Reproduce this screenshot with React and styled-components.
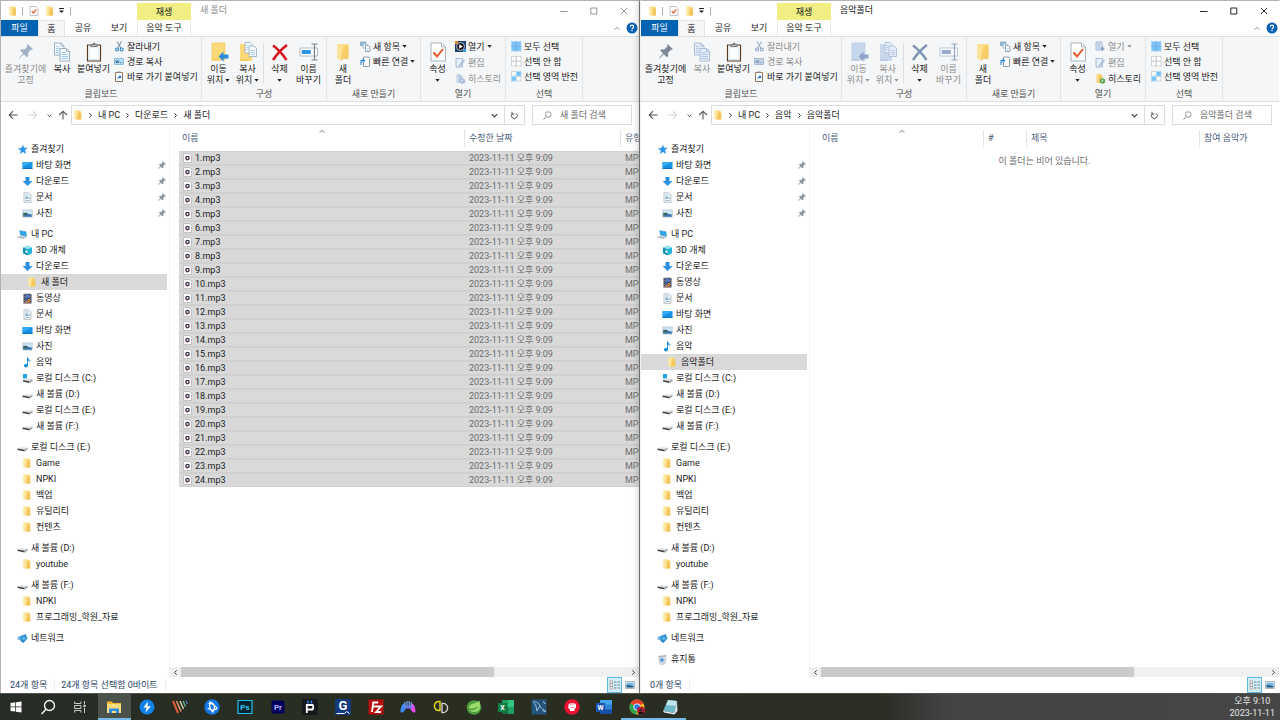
import React from 'react';
import styled, { createGlobalStyle, css } from 'styled-components';

const GlobalStyle = createGlobalStyle`
  *, *::before, *::after { box-sizing: border-box; }
  body { margin: 0; background: #fff; }
  body, button, input {
    font-family: Roboto, "Noto Sans CJK KR", sans-serif;
    font-size: 9px;
    line-height: 12px;
    color: #1b1b1b;
  }
  button { border: 0; padding: 0; margin: 0; background: none; cursor: pointer; }
  svg { display: block; flex: none; }
  ul { list-style: none; margin: 0; padding: 0; }
`;

/* ---------- drawings ---------- */

const Svg = ({ w = 10, h = 10, box, children }) => (
  <svg width={w} height={h} viewBox={box || `0 0 ${w} ${h}`} fill="none" aria-hidden="true">
    {children}
  </svg>
);

const FolderIcon = ({ w = 10 }) => (
  <Svg w={w} h={10}>
    <path d="M1.5 .5h4.2l2.3.6v8.4H1.5z" fill="#fbdc86" />
    <path d="M5.7 1.2 8.4 3v6.5H4z" fill="#f3c75c" />
    <path d="M1.5.5h2v9h-2z" fill="#fde8a6" />
  </Svg>
);
const CheckDocIcon = () => (
  <Svg w={10} h={10}>
    <path d="M1 .5h6l2 2v7H1z" fill="#fff" stroke="#b4b4b4" strokeWidth=".8" />
    <path d="m2.8 5 1.6 2 3-3.6" stroke="#e8562a" strokeWidth="1.2" />
  </Svg>
);
const QuickMenuIcon = () => (
  <Svg w={5} h={6}><path d="M0 .5h5" stroke="#222" /><path d="M0 2.5h5L2.500 5z" fill="#222" /></Svg>
);
const CaretIcon = ({ color = '#222' }) => (
  <Svg w={5} h={3}><path d="M.3 0h4.4L2.5 2.8z" fill={color} /></Svg>
);
const ChevronDown = ({ w = 7, color = '#444' }) => (
  <Svg w={w} h={w} box="0 0 7 7"><path d="m.8 2.2 2.7 2.7 2.7-2.7" stroke={color} strokeWidth="1.2" /></Svg>
);
const ChevronUp = ({ color = '#777' }) => (
  <Svg w={6} h={5} box="0 0 7 6"><path d="m.8 4.3 2.7-2.7 2.7 2.7" stroke={color} strokeWidth="1.1" /></Svg>
);
const ChevronRight = ({ flip }) => (
  <Svg w={5} h={7}><path d={flip ? 'M3.700 1.300 1.500 3.500l2.200 2.200' : 'M1.300 1.300l2.200 2.200-2.200 2.200'} stroke="#3a3a3a" /></Svg>
);
const MinimizeIcon = ({ color }) => <Svg w={8} h={8}><path d="M0 4.5h7.5" stroke={color} strokeWidth=".9" /></Svg>;
const MaximizeIcon = ({ color }) => <Svg w={8} h={8}><path d="M.8 1h6v6h-6z" stroke={color} strokeWidth=".9" /></Svg>;
const CloseIcon = ({ color }) => <Svg w={8} h={8}><path d="m1 1 6 6M7 1 1 7" stroke={color} strokeWidth=".9" /></Svg>;
const HelpIcon = () => (
  <Svg w={12} h={12}>
    <circle cx="6" cy="6" r="5.5" fill="#0a63b4" />
    <path d="M4.4 4.7c0-2.1 3.3-2 3.3 0C7.700 5.900 6 5.900 6 7.200" stroke="#fff" strokeWidth="1.2" />
    <path d="M5.4 8.100h1.200v1.200H5.400z" fill="#fff" />
  </Svg>
);

const BigPinIcon = ({ off }) => (
  <Svg w={20} h={20}>
    <g fill={off ? '#a3b1c6' : '#7d8a96'}>
      <path d="m11.500 2 5.500 5.300-1.500.7-.6-.2-2.900 3.300.2 3-1.200 1.200-3.200-3.100L3.400 16.500l-.4-.4 4-4.700L4.200 8.500l1.200-1.200 3 .1L11.500 4.200l-.5-.7z" />
    </g>
  </Svg>
);
const CopyIcon = ({ off }) => (
  <Svg w={20} h={20}>
    <g fill={off ? '#e3ebf8' : '#f4f9ff'} stroke={off ? '#a5b7d2' : '#93a7bd'} strokeWidth=".9">
      <path d="M2.500 1h6.500l3 3v9H2.500z" />
      <path d="M8 6.500h6.500l3 3v9.500H8z" />
    </g>
    <path d="M4 4.500h3M4 6.500h3M4 8.500h3M4 10.500h3M9.500 10.500h4.500M9.500 12.500h6.500M9.500 14.500h6.500M9.500 16.500h6.500" stroke={off ? '#b6c8e6' : '#9fcaf2'} />
    <path d="M9 1v3h3M14.500 6.500v3h3" stroke={off ? '#a5b7d2' : '#93a7bd'} strokeWidth=".8" />
  </Svg>
);
const PasteIcon = () => (
  <Svg w={20} h={20}>
    <path d="M3.500 3h13v16h-13z" fill="#fdfeff" stroke="#5a3d23" strokeWidth="1.200" />
    <path d="M5 5h10v12.500H5z" stroke="#d8e6f2" />
    <path d="M6.500 2h2c.3-1.700 2.700-1.700 3 0h2v3h-7z" fill="#7c7c7c" />
    <path d="M7.500 3h5v1h-5z" fill="#bdbdbd" />
  </Svg>
);
const CutIcon = ({ off }) => (
  <Svg w={11} h={11}>
    <path d="M3 .5 7 7M7.500.5 3.700 7" stroke={off ? '#9fb0c8' : '#8796a5'} strokeWidth="1.100" />
    <circle cx="3" cy="8.500" r="1.500" stroke={off ? '#8ea6c8' : '#2f87d0'} strokeWidth="1.100" />
    <circle cx="7.700" cy="8.500" r="1.500" stroke={off ? '#8ea6c8' : '#2f87d0'} strokeWidth="1.100" />
  </Svg>
);
const PathIcon = ({ off }) => (
  <Svg w={11} h={11}>
    <path d="M.5 2.500h9v6h-9z" fill={off ? '#c4d2e8' : '#b3dcf8'} stroke={off ? '#a9b9d4' : '#8fbfe0'} />
    <path d="m1.500 4.500.9 2.500.9-2.500.9 2.500.9-2.500M6 6.700h.8M7.800 6.700h.8" stroke={off ? '#758cab' : '#2b5878'} strokeWidth=".8" />
  </Svg>
);
const ShortcutIcon = () => (
  <Svg w={11} h={11}>
    <path d="M1.500 1.500h7v9h-7z" fill="#fff" stroke="#8a745e" />
    <path d="M3.500.5h3v1.500h-3z" fill="#888" />
    <path d="M3.500 8.500c-.3-2 .7-3.300 2-3.300V4l2.200 2-2.200 2V6.700c-1 0-1.700.7-2 1.800z" fill="#1f6fc4" />
  </Svg>
);
const MoveToIcon = ({ off }) => (
  <Svg w={20} h={20}>
    <path d="M3 1h13v17H3z" fill={off ? '#c9d7ee' : '#fbd978'} />
    <path d="M3 1h13v17H3z" stroke={off ? '#bccbe4' : '#f0cb66'} strokeWidth=".8" />
    <path d="M2.500 17h8v1.500h-8z" fill={off ? '#b6c6e0' : '#f5ca52'} />
    <path d="m9.500 14.500 5-5v3h5v4h-5v3z" fill={off ? '#8ea4c8' : '#2d8ddb'} />
  </Svg>
);
const CopyToIcon = ({ off }) => (
  <Svg w={20} h={20}>
    <path d="M2 2h12v17H2z" fill={off ? '#c9d7ee' : '#fbd978'} />
    <path d="M2 17.500h8V19H2z" fill={off ? '#b6c6e0' : '#f5ca52'} />
    <g fill={off ? '#e6edf8' : '#f6faff'} stroke={off ? '#a5b7d2' : '#98a9bb'} strokeWidth=".8">
      <path d="M7 .500h5l2 2v8.500H7z" />
      <path d="M11 4h5l2.500 2.500v8H11z" />
    </g>
    <path d="M8.500 3.500h2M8.500 5.500h2M8.500 7.500h2M12.500 8.500h4.500M12.500 10.500h4.500M12.500 12.500h4.500" stroke={off ? '#b6c8e6' : '#9fcaf2'} strokeWidth=".9" />
  </Svg>
);
const DeleteIcon = ({ off }) => (
  <Svg w={20} h={20}>
    <path d="M3 3.500c5 3.500 9.500 8.500 13.500 14.500M17 3C11.500 7 7 12 3 18" stroke={off ? '#8095b5' : '#d8101c'} strokeWidth="2.500" />
  </Svg>
);
const RenameIcon = ({ off }) => (
  <Svg w={20} h={20}>
    <path d="M1 6h17.500v8H1z" fill="#fff" stroke={off ? '#afbed6' : '#a9b4c0'} strokeWidth=".9" />
    <path d="M2.800 8h9v4h-9z" fill={off ? '#96abce' : '#2f93de'} />
    <path d="M12.500 2h2c1 0 1 .5 1 1.500v13c0 1-.3 1.500-1 1.500h-2M18.500 2h-2c-.7 0-1 .5-1 1.500v13c0 1 .3 1.500 1 1.500h2" stroke={off ? '#8fa3c2' : '#77828e'} strokeWidth="1.200" />
  </Svg>
);
const NewFolderIcon = () => (
  <Svg w={20} h={20}>
    <path d="M4 2h10.500l1 1v13.500H4z" fill="#fbdc86" />
    <path d="M10.500 5 15.500 3v14h-5l-3 2z" fill="#f6cd68" />
    <path d="M4 2.500 7.500 5v14L4 16.500z" fill="#fbe4a0" />
  </Svg>
);
const NewItemIcon = () => (
  <Svg w={11} h={11}>
    <path d="M.5 1h5v3.500h-5z" fill="#8fc5ee" stroke="#7f95a8" strokeWidth=".7" />
    <path d="M3 3h4v4H3z" fill="#f1f7fc" stroke="#8ba0b3" strokeWidth=".7" />
    <path d="M5.500 4.500h3l1.500 1.500v4.500H5.500z" fill="#fff" stroke="#7d8d9c" strokeWidth=".8" />
    <path d="M7 7.500h1.500M7 9h1.500" stroke="#7cb7e8" strokeWidth=".7" />
  </Svg>
);
const EasyAccessIcon = () => (
  <Svg w={11} h={11}>
    <path d="M3.500 1h4.500l1.500 1.500v8h-6z" fill="#fff" stroke="#7d8893" strokeWidth=".8" />
    <path d="M1 9V4.500h2.500M2.600 2.500l2 2-2 2" stroke="#2f8ad6" strokeWidth="1.100" />
  </Svg>
);
const PropertiesIcon = () => (
  <Svg w={20} h={20}>
    <path d="M3 1h10.500l4 4v14H3z" fill="#fff" stroke="#a3abb3" strokeWidth=".9" />
    <path d="M13.500 1v4h4" stroke="#a3abb3" strokeWidth=".9" />
    <path d="m5.500 10.500 3.500 4 6-7.500" stroke="#e4572a" strokeWidth="2" />
  </Svg>
);
const MediaIcon = () => (
  <Svg w={11} h={11}>
    <path d="M0 0h11v11H0z" fill="#1d3f73" />
    <path d="M0 0h3v3H0z" fill="#e98a2d" /><path d="M8 8h3v3H8z" fill="#3e9be4" />
    <circle cx="5.500" cy="5.500" r="4" fill="#1a1a1a" stroke="#d6dde6" strokeWidth=".8" />
    <path d="M4.200 3.300 7.900 5.500 4.200 7.700z" fill="#fff" />
  </Svg>
);
const OpenIcon = () => (
  <Svg w={11} h={11}>
    <path d="M1 1h6v8H1z" fill="#e2ebf7" stroke="#9db2d2" strokeWidth=".9" />
    <path d="M2.500 3h3M2.500 5h3M2.500 7h2" stroke="#9db2d2" /><path d="M5.500 7.500h4M7.500 5.500v4.500" stroke="#8198be" strokeWidth="1.300" />
  </Svg>
);
const EditIcon = () => (
  <Svg w={11} h={11}>
    <path d="M1 1.500h6.500v8.500H1z" fill="#e6eef9" stroke="#a3b6d3" strokeWidth=".9" />
    <path d="m3.800 8.500 5-6 1.200 1-5 6-1.600.5z" fill="#9eb4d8" />
  </Svg>
);
const HistoryIcon = ({ off }) => (
  <Svg w={11} h={11}>
    <path d="M1.500 1h4.500v9H1.500z" fill={off ? '#c8d6ec' : '#f9d77c'} />
    <path d="M4 2.500h3.500V10H4z" fill={off ? '#b7c8e3' : '#f1c65c'} />
    <circle cx="7.500" cy="8" r="2.700" fill={off ? '#a5b9da' : '#5ba453'} />
    <path d="M7.500 6.500V8.200h-1.300" stroke="#fff" strokeWidth=".8" />
  </Svg>
);
const SelectGrid = ({ cells }) => (
  <Svg w={11} h={11}>
    {[[1, 1], [6, 1], [1, 6], [6, 6]].map(([x, y], i) => (
      <rect key={i} x={x - 0.5} y={y - 0.5} width="4.500" height="4.500" fill={cells[i] ? '#7cc3f5' : '#fff'} stroke={cells[i] ? '#a8d8fa' : '#c9ced4'} strokeWidth=".8" />
    ))}
    {cells[0] && cells[1] ? <path d="M5.200.500v10M.500 5.200h10" stroke="#3f93d8" strokeWidth=".7" /> : null}
  </Svg>
);

const BackIcon = () => <Svg w={10} h={10}><path d="M9.500 5H1.500M5 1.200 1.200 5 5 8.800" stroke="#555" strokeWidth="1.100" /></Svg>;
const ForwardIcon = () => <Svg w={10} h={10}><path d="M.5 5h8M5 1.200 8.800 5 5 8.800" stroke="#cfcfcf" /></Svg>;
const UpIcon = () => <Svg w={10} h={10}><path d="M5 9.500V1.500M1.200 5 5 1.200 8.800 5" stroke="#555" strokeWidth="1.100" /></Svg>;
const RefreshIcon = () => (
  <Svg w={9} h={9}><path d="M2.200 2.500a3 3 0 1 0 4.300 0M2 .7v2.300h2.500" stroke="#555" /></Svg>
);
const SearchIcon = () => (
  <Svg w={9} h={9}><circle cx="5.300" cy="3.500" r="2.800" stroke="#8a8a8a" strokeWidth=".9" /><path d="M3.200 5.500.5 8.500" stroke="#8a8a8a" /></Svg>
);

const navIcons = {
  star: <Svg w={11} h={11}><path d="m6 .8 1.200 3 3.500-.1-2.700 2.400 1.200 3.700-3.300-1.900-3 2.200.9-3.700L.8 4.500l3.600-.5z" fill="#2c97e8" /></Svg>,
  desktop: <Svg w={11} h={11}><path d="M.5 2h10v7H.5z" fill="#1492e6" /><path d="M.5 8.200h10V9H.5z" fill="#0b6cb8" /><path d="M.5 2h10L.5 7z" fill="#38aaf2" /></Svg>,
  down: <Svg w={11} h={11}><path d="M3.500 1h4v4h3l-5 5-5-5h3z" fill="#2d8fe2" /></Svg>,
  doc: <Svg w={11} h={11}><path d="M2 .8h5l2 2v7.500H2z" fill="#f8fafc" stroke="#a9b3bd" strokeWidth=".8" /><path d="M3.500 3h3M3.500 8.500h4" stroke="#8ba9c4" strokeWidth=".8" /><path d="M3.500 4.500h2.200v2.500H3.500z" fill="#5fa9de" /><path d="M6.500 5h1.500M6.500 6.500h1.500" stroke="#7f9fbc" strokeWidth=".8" /></Svg>,
  picture: <Svg w={11} h={11}><path d="M.8 2h9.400v7H.8z" fill="#cfe6f7" stroke="#b4bfc9" strokeWidth=".8" /><path d="m1.200 5.500 3-1 2.500 1.500 3.100.5v2.200H1.200z" fill="#3c78a8" /><path d="M1.200 5.200 4 4.800l1.500 2H1.200z" fill="#3e5f4a" /></Svg>,
  pc: <Svg w={11} h={11}><path d="m2.500 1.500 6.500 1 .8 5-6.300-1.300z" fill="#2aa4ec" stroke="#6aa0c6" strokeWidth=".5" /><path d="M.5 7.500 4 7l6 1.300L6.500 10 0 8.800z" fill="#b7c2cc" /></Svg>,
  cube: <Svg w={11} h={11}><path d="M5.500.8 10 2.500v5.800L5.500 10.200 1 8.300V2.500z" fill="#22b5d4" /><path d="m1 2.500 4.500 1.700v6L1 8.300z" fill="#0f91b4" /><path d="M5.500.8 10 2.500 5.500 4.200 1 2.500z" fill="#8fe4f2" /><path d="m3.500 5 2 .7v2.500l-2-.7z" fill="#e8fbff" /></Svg>,
  video: <Svg w={11} h={11}><path d="M1.500.8h8v9.700h-8z" fill="#3a3f4a" /><path d="M3 1.500h5v3.700H3z" fill="#5577b8" /><path d="M3 6h5v3.800H3z" fill="#c77b47" /><path d="M3 6h3v2H3z" fill="#49679e" /><path d="M2.200 1v9.500M8.800 1v9.500" stroke="#cdd3da" strokeWidth=".6" strokeDasharray="1 1" /></Svg>,
  music: <Svg w={11} h={11}><path d="M5 .5h1c.3 1.800 3 2.500 2.500 5-.5-1.300-1.400-1.800-2.500-2v5.300A2 1.700 0 1 1 5 7.200z" fill="#1c8fe0" /></Svg>,
  drive: <Svg w={11} h={11}><path d="M.5 6.500 4 5l6.500.8-3 2z" fill="#dfe2e5" /><path d="m.5 6.500 7 1.300v1.700l-7-1.500z" fill="#3f4347" /><path d="m7.500 7.800 3-2v1.700l-3 2z" fill="#8c9196" /></Svg>,
  driveC: <Svg w={11} h={11}><path d="M1 1h4v4.500H1z" fill="#21a5ea" /><path d="M1 7 4 5.500l6.500.8-3 2z" fill="#dfe2e5" /><path d="m1 7 6.500 1.300V10L1 8.500z" fill="#3f4347" /><path d="m7.500 8.300 3-2V8l-3 2z" fill="#8c9196" /></Svg>,
  network: <Svg w={11} h={11}><path d="m.5 4 5-2v6l-5-1.500z" fill="#76b9e4" /><path d="m3.500 3.500 5-2.500 2 4.500-4 4.500-3-2z" fill="#2d87c8" /><circle cx="6.800" cy="5.500" r="2" fill="#57b2ef" /></Svg>,
  trash: <Svg w={11} h={11}><path d="m1.500 2.200 7.500-1L8 10l-4.800.5z" fill="#d5dde4" stroke="#a7b2bc" strokeWidth=".6" /><path d="M1.500 2.200c2 1 5.500.5 7.500-1" stroke="#93a1ad" strokeWidth=".7" /><path d="M3.500 4.500h3v3h-3z" fill="#3c94dd" /></Svg>,
  folder: <FolderIcon w={11} />,
};
const SmallPin = () => (
  <Svg w={8} h={8} box="2 1 16 16">
    <path d="m11.500 2 5.500 5.300-1.500.7-.6-.2-2.900 3.300.2 3-1.200 1.200-3.200-3.100L3.400 16.500l-.4-.4 4-4.700L4.200 8.500l1.200-1.200 3 .1L11.500 4.200l-.5-.7z" fill="#87939d" stroke="#87939d" strokeWidth=".8" />
  </Svg>
);
const Mp3Icon = () => (
  <Svg w={9} h={10}>
    <path d="M.5.5h6l2 2v7h-8z" fill="#fff" stroke="#b5b5bd" strokeWidth=".8" />
    <circle cx="4.500" cy="5" r="2.300" fill="#3a3352" /><circle cx="4.500" cy="5" r="1" fill="#f2dfd2" />
    <path d="M2.600 6.300a2.300 2.300 0 0 0 2 1" stroke="#c5572f" strokeWidth=".8" />
  </Svg>
);
const DetailsIcon = () => (
  <Svg w={12} h={10}>
    <path d="M1 .8h2.500v2.500H1zM1 3.700h2.500v2.500H1zM1 6.600h2.500v2.500H1z" fill="#fff" stroke="#9c8f8c" strokeWidth=".7" />
    <path d="M5 2h2.500M8.500 2H11M5 5h2.500M8.500 5H11M5 8h2.500M8.500 8H11" stroke="#5f7f95" strokeWidth=".9" />
  </Svg>
);
const ThumbIcon = () => (
  <Svg w={10} h={8}><path d="M.5.5h9v7h-9z" fill="#fff" stroke="#9aa3ab" strokeWidth=".8" /><path d="M1.500 1.500h7v5h-7z" fill="#76b5e6" /><path d="m1.500 4 3 .3 4 1v1.200h-7z" fill="#245b7e" /></Svg>
);

const Label = ({ x = 8, y = 11.5, size = 9, fill = '#fff', children }) => (
  <text x={x} y={y} fontSize={size} fontWeight="700" fill={fill} textAnchor="middle">{children}</text>
);
const taskIcons = {
  start: <Svg w={12} h={12}><path d="M.5 2 5.300 1.300v4.300H.5zM6 1.200 11.500.4v5.200H6zM.5 6.300h4.800v4.300L.5 10zM6 6.300h5.500v5.200L6 10.700z" fill="#fff" /></Svg>,
  search: <Svg w={16} h={16}><circle cx="9.500" cy="6.500" r="5" stroke="#fff" strokeWidth="1.300" /><path d="M6 10.200 1.500 15" stroke="#fff" strokeWidth="1.400" /></Svg>,
  taskview: <Svg w={12} h={12}><path d="M.6.500v2h6.300v-2M.6 11.500v-2h6.300v2M.6 4.500h6.300v3H.6zM10.500 0v3M10.500 6.500v5.500M9.800 4h1.500v1.500H9.800z" stroke="#dedede" strokeWidth=".9" /></Svg>,
  explorer: <Svg w={16} h={16}><path d="M1 2.500h5l1 1.500h8v10H1z" fill="#f5b92e" /><path d="M1 5h14v9H1z" fill="#fbdc7f" /><path d="M3 14V9.500h10V14h-3v-2H6v2z" fill="#2f8ee0" /></Svg>,
  bolt: <Svg w={16} h={16}><circle cx="8" cy="8" r="7.500" fill="#0f83ea" /><path d="M8.800 2.500 4.500 8.500l3 .3L6.500 13.500l5.300-6-3.300-.6z" fill="#fff" /></Svg>,
  stripes: <Svg w={16} h={16}><path d="m1 2 5 12" stroke="#e05a3c" strokeWidth="2" /><path d="m4.500 2 4.500 10.500" stroke="#e59a6a" strokeWidth="1.500" /><path d="m8 2 3.500 8" stroke="#e7d3b4" strokeWidth="1.400" /><path d="m11 2 2.500 5.500" stroke="#5fae96" strokeWidth="1.500" /><path d="m14 2 1.300 3" stroke="#5b7fc4" strokeWidth="1.300" /></Svg>,
  battle: <Svg w={16} h={16}><circle cx="8" cy="8" r="7.700" fill="#1477e8" /><path d="M4.500 4.500c3-.5 7 2 8.500 5-2.500 2-6.500 1.500-9.300-.2M6 3c-.8 3.500.2 7.500 2.700 10 1.300-1.500 2-4 1.700-6.500C9.500 5 8 3.500 6 3z" stroke="#fff" strokeWidth="1.200" /></Svg>,
  ps: <Svg w={16} h={16}><path d="M1 1.500h14v13H1z" fill="#04232e" stroke="#1fc0ea" strokeWidth="1.200" /><Label size={8} fill="#2bc8f2" y={11}>Ps</Label></Svg>,
  pr: <Svg w={16} h={16}><rect x="1.500" y="1.500" width="13" height="13" rx="2" fill="#00005b" /><Label size={8} fill="#b9b4ff" y={11}>Pr</Label></Svg>,
  plug: <Svg w={16} h={16}><path d="M0 0h16v16H0z" fill="#17191f" /><path d="M6 1.500v3M9.500 1.500v3" stroke="#2e86e8" strokeWidth="1.500" /><path d="M4.800 14V6h5.500c1.200 0 1.200 4.500 0 4.500H5" stroke="#fff" strokeWidth="1.800" /></Svg>,
  g: <Svg w={16} h={16}><path d="M0 0h16v16H0z" fill="#123a7c" /><Label size={13} y={11}>G</Label><path d="M1.500 14.500h8l2-2 3 2" stroke="#fff" /></Svg>,
  fz: <Svg w={16} h={16}><path d="M.5.500h15v15H.5z" fill="#b90d0d" /><path d="M4 13 5.200 3.500h5M4.800 7.500h3.700M8.500 7.500h4.500L8 13h5" stroke="#fff" strokeWidth="1.800" /></Svg>,
  game: (
    <Svg w={16} h={16}>
      <path d="M.5 12.500C.5 9 2 5 4 4.500l2.500 4.500c-1.500 1.500-2.500 4-4 4.500-1.300.4-2-.3-2-1z" fill="#3f8bf5" />
      <path d="M15.500 12.500c0-3.500-1.500-7.500-3.500-8L9.500 9c1.500 1.500 2.500 4 4 4.500 1.300.4 2-.3 2-1z" fill="#e04bea" />
      <path d="M4.500 6.500h7.300v3H4.500z" fill="#6a74ec" />
      <path d="M4.800 3v5M7 2v5M9.200 2v5M11.300 3v5" stroke="#6fa0f8" strokeWidth="1.300" />
    </Svg>
  ),
  id: <Svg w={16} h={16}><path d="M7 2.500v9C-.5 12.500-.5 1.500 7 2.500z" stroke="#e8d61c" strokeWidth="1.400" /><path d="M9 4.500v9c7.500 1 7.500-10 0-9z" stroke="#d9d9d9" strokeWidth="1.300" /></Svg>,
  spring: <Svg w={16} h={16}><circle cx="8" cy="8.500" r="7.300" fill="#4c9b3c" /><path d="M13.500 1.500C14 6 16 12 9 13c-3 .4-5-1-6-2 5 1 8-1 10-4.500-2.500 2.500-5.500 3.300-10 3C2.500 4 9 5.500 13.500 1.500z" fill="#9bdb6c" /></Svg>,
  excel: <Svg w={16} h={16}><path d="M4 1h12v14H4z" fill="#1e9f61" /><path d="M10 1h6v7h-6z" fill="#33c481" /><path d="M4 8h6v7H4z" fill="#176b43" /><path d="M0 4h9v9H0z" fill="#0f7c41" /><Label x={4.500} y={11} size={7}>X</Label></Svg>,
  mysql: <Svg w={16} h={16}><path d="M.5.500h15v15H.5z" fill="#23547e" /><path d="M2 3c3-1 6 1 7 4 1 2.500 2 3 4 4l-1 .5 1.500 1.500M3 4l2 3 1 5 1-2.500M9 7l-2 3" stroke="#a5c7dd" strokeWidth=".9" /><path d="M12 3c1 0 2 1 2 2M14 13v-2" stroke="#cde0ee" /></Svg>,
  fist: <Svg w={16} h={16}><circle cx="8" cy="8" r="7.700" fill="#ec1231" /><path d="M4.500 5.500 6 4.300h4.500L12 5.500v3L10.500 10v2H6v-1.500L4.300 9z" fill="#fff" /><path d="M6.300 4.500v1.700M8.200 4.500v1.700M10 4.500v1.700M6.500 8.500h3.500" stroke="#ec1231" strokeWidth=".5" /></Svg>,
  word: <Svg w={16} h={16}><path d="M4 1h12v14H4z" fill="#2d83d6" /><path d="M4 1h12v4.500H4z" fill="#43a5ee" /><path d="M4 10.500h12V15H4z" fill="#174ea8" /><path d="M0 4h9v9H0z" fill="#1853b4" /><Label x={4.500} y={11} size={7}>W</Label></Svg>,
  chrome: <Svg w={16} h={16}><circle cx="8" cy="8" r="7.500" fill="#fbc118" /><path d="M8 8 1.500 4.200A7.500 7.500 0 0 1 14.500 4.200z" fill="#e33e2b" /><path d="M8 8 1.500 4.200a7.500 7.500 0 0 0 6 11.200z" fill="#2ba24c" /><circle cx="8" cy="8" r="3.600" fill="#fff" /><circle cx="8" cy="8" r="2.800" fill="#2e7be9" /><circle cx="12" cy="11.500" r="4" fill="#b81d33" /><path d="M9.500 15v-2h5v2z" fill="#141414" /><circle cx="12" cy="11" r="1.600" fill="#37242a" /></Svg>,
  notepad: <Svg w={16} h={16}><path d="m6 1 9 1-3 12-11-2z" fill="#6fb9cc" /><path d="m6 1 9 1-1.500 5L4 6z" fill="#bfe4ee" /><path d="m15 2 .5 10-3 3.500L12 14z" fill="#d9e6e9" /><path d="m1 12 11 2 .500 1.500L2 13.500z" fill="#f1f7f8" /></Svg>,
};

/* ---------- window frame ---------- */

const Desktop = styled.div`
  min-height: 100vh;
  display: flex;
  flex-direction: column;
  overflow: hidden;
`;
const Windows = styled.div`
  flex: 1;
  display: grid;
  grid-template-columns: 1fr 1fr;
`;
const WindowFrame = styled.section`
  min-width: 0;
  display: flex;
  flex-direction: column;
  background: #fff;
  border-top: 1px solid #b4b4b4;
  border-left: 1px solid ${(p) => (p.$active ? '#f0f0f0' : '#b4b4b4')};
  border-right: 1px solid ${(p) => (p.$active ? '#fff' : '#808080')};
  box-shadow: ${(p) => (p.$active ? '0 0 8px rgba(0, 0, 0, 0.3)' : 'none')};
`;
const TitleBar = styled.header`
  display: flex;
  align-items: stretch;
  height: 19px;
`;
const QuickAccess = styled.div`
  display: flex;
  align-items: center;
  gap: 6px;
  width: 136px;
  padding-left: 7px;
`;
const Divider = styled.span`
  width: 1px;
  height: 8px;
  background: #a8a8a8;
`;
const ContextTab = styled.div`
  width: 54px;
  margin-top: 2px;
  background: #f1ee84;
  display: flex;
  align-items: center;
  justify-content: center;
`;
const WindowTitle = styled.h1`
  flex: 1;
  margin: 0;
  padding: 3px 0 0 9px;
  font-size: 9px;
  line-height: 12px;
  font-weight: 400;
  color: ${(p) => (p.$active ? '#111' : '#8c8c8c')};
`;
const CaptionButton = styled.button`
  width: 30px;
  display: flex;
  align-items: center;
  justify-content: center;
`;

/* ---------- ribbon ---------- */

const TabRow = styled.nav`
  display: flex;
  height: 16px;
  align-items: stretch;
`;
const RibbonTab = styled.button`
  width: ${(p) => p.$width}px;
  line-height: 14px;
  ${(p) => p.$kind === 'file' && css`background: #0063b1; color: #fff;`}
  ${(p) => p.$kind === 'current' && css`
    background: #f5f6f7;
    border: 1px solid #e3e4e5;
    border-bottom: 0;
  `}
  ${(p) => p.$kind === 'context' && css`border: solid #e8e8e8; border-width: 0 1px;`}
`;
const TabTools = styled.div`
  margin-left: auto;
  display: flex;
  align-items: center;
  gap: 6px;
  padding-right: 1px;
`;
const Ribbon = styled.div`
  display: flex;
  height: 66px;
  background: #f5f6f7;
  border: solid #dedfe0;
  border-width: 1px 0;
  overflow: hidden;
`;
const RibbonGroup = styled.div`
  width: ${(p) => p.$width}px;
  flex: none;
  display: flex;
  flex-direction: column;
  border-right: 1px solid #e2e3e4;
`;
const GroupTools = styled.div`
  flex: 1;
  display: flex;
  padding-left: 2px;
`;
const GroupLabel = styled.div`
  text-align: center;
  color: #505050;
  line-height: 14px;
`;
const BigButton = styled.button`
  width: ${(p) => p.$width}px;
  padding-top: 5px;
  display: flex;
  flex-direction: column;
  align-items: center;
  gap: 2px;
  line-height: 11px;
  white-space: nowrap;
  color: ${(p) => (p.disabled ? '#8a8a8a' : '#1b1b1b')};
`;
const BigLines = styled.span`
  display: flex;
  flex-direction: column;
  align-items: center;
`;
const BigLabel = styled.span`
  display: flex;
  align-items: center;
  gap: 2px;
`;
const CaretLine = styled.span`
  height: 10px;
  display: flex;
  align-items: center;
`;
const ToolSeparator = styled.span`
  width: 1px;
  margin: 6px 1px 0;
  height: 40px;
  background: #dcdddf;
`;
const SmallTools = styled.div`
  display: flex;
  flex-direction: column;
  gap: ${(p) => (p.$loose ? '1px' : '0')};
  padding: 2px 0 0 3px;
`;
const SmallButton = styled.button`
  height: 15px;
  display: flex;
  align-items: center;
  gap: 2px;
  white-space: nowrap;
  color: ${(p) => (p.disabled ? '#8a8a8a' : '#1b1b1b')};
`;

/* ---------- address row ---------- */

const AddressRow = styled.div`
  display: flex;
  align-items: center;
  height: 26px;
  padding-right: 7px;
`;
const HistoryButtons = styled.div`
  width: 70px;
  display: flex;
  align-items: center;
  padding-left: 7px;
`;
const HistoryButton = styled.button`
  padding-right: ${(p) => p.$space}px;
`;
const AddressBox = styled.div`
  flex: 1;
  min-width: 0;
  height: 20px;
  display: flex;
  align-items: center;
  border: 1px solid #dcdcdc;
  padding-left: 1px;
`;
const Crumbs = styled.div`
  flex: 1;
  display: flex;
  align-items: center;
  white-space: nowrap;
  & > svg { margin-right: 5px; }
`;
const Crumb = styled.button`
  margin-right: 5px;
`;
const CrumbArrow = styled.span`
  margin-right: 5px;
`;
const BoxButton = styled.button`
  width: 20px;
  height: 18px;
  display: flex;
  align-items: center;
  justify-content: center;
  border-left: ${(p) => (p.$ruled ? '1px solid #dcdcdc' : '0')};
`;
const SearchBox = styled.label`
  width: 100px;
  height: 20px;
  margin-left: 7px;
  border: 1px solid #dcdcdc;
  display: flex;
  align-items: center;
  gap: 8px;
  padding-left: 10px;
`;
const SearchInput = styled.input`
  width: 100%;
  min-width: 0;
  border: 0;
  outline: 0;
  padding: 0;
  background: transparent;
  &::placeholder { color: #6b6b6b; opacity: 1; }
`;

/* ---------- body ---------- */

const Body = styled.div`
  flex: 1;
  display: flex;
  min-height: 0;
`;
const NavPane = styled.nav`
  width: 169px;
  flex: none;
  border-right: 1px solid #f3f3f3;
  padding: 13px 2px 0 0;
  display: flex;
  flex-direction: column;
  gap: 5px;
`;
const NavItem = styled.li`
  height: 16px;
  display: flex;
  align-items: center;
  gap: 3px;
  padding: 0 1px 0 ${(p) => 16 + p.$level * 5}px;
  background: ${(p) => (p.$selected ? '#d9d9d9' : 'transparent')};
  white-space: nowrap;
`;
const NavLink = styled.a`
  flex: 1;
  color: inherit;
  text-decoration: none;
`;
const FilePane = styled.main`
  flex: 1;
  min-width: 0;
  display: flex;
  flex-direction: column;
`;
const FileArea = styled.div`
  flex: 1;
  overflow: hidden;
  padding-left: 9px;
`;
const FileTable = styled.table`
  table-layout: fixed;
  width: ${(p) => p.$width}px;
  border-collapse: separate;
  border-spacing: 0;
  white-space: nowrap;
`;
const HeadCell = styled.th`
  width: ${(p) => p.$width}px;
  height: 23px;
  padding: 0 0 4px ${(p) => (p.$first ? 3 : 4)}px;
  font-weight: 400;
  text-align: left;
  color: #4c607a;
  background: linear-gradient(#e4e4e4, #e4e4e4) right 2px / 1px 17px no-repeat;
  position: relative;
`;
const SortMark = styled.span`
  position: absolute;
  inset: 1px 0 auto;
  display: flex;
  justify-content: center;
`;
const Cell = styled.td`
  height: 14px;
  padding: 0 0 0 4px;
  line-height: 12px;
  background: #d9d9d9;
  border: solid #d0d0d0;
  border-width: 1px 0;
  color: ${(p) => (p.$name ? '#1b1b1b' : '#6d6d6d')};
`;
const FileName = styled.span`
  display: flex;
  align-items: center;
  gap: 3px;
`;
const EmptyNote = styled.p`
  margin: 4px 0 0;
  padding-right: 9px;
  text-align: center;
  color: #6d6d6d;
`;
const ScrollBar = styled.div`
  height: 10px;
  display: flex;
  background: #efefef;
`;
const ScrollButton = styled.button`
  width: 11px;
  display: flex;
  align-items: center;
  justify-content: center;
`;
const ScrollTrack = styled.div`
  flex: 1;
`;
const ScrollThumb = styled.div`
  width: 70%;
  height: 10px;
  background: #cbcbcb;
`;
const StatusBar = styled.footer`
  height: 16px;
  display: flex;
  align-items: center;
  padding: 0 2px 0 9px;
  color: #1f3f66;
`;
const StatusText = styled.span`
  padding-right: 7px;
  margin-right: 6px;
  border-right: 1px solid #ececec;
`;
const ViewButtons = styled.div`
  margin-left: auto;
  display: flex;
`;
const ViewButton = styled.button`
  width: 15px;
  height: 16px;
  display: flex;
  align-items: center;
  justify-content: center;
  border: 1px solid ${(p) => (p.$on ? '#5db7e8' : 'transparent')};
  background: ${(p) => (p.$on ? '#d3edf9' : 'transparent')};
`;

/* ---------- taskbar ---------- */

const TaskBar = styled.footer`
  height: 27px;
  flex: none;
  display: flex;
  align-items: stretch;
  background: linear-gradient(90deg, #262d26 0%, #2a2e20 35%, #292d24 69%, #444344 74%, #464646 100%);
  border-top: 1px solid #50544e;
  position: relative;
`;
const SystemButtons = styled.div`
  display: grid;
  grid-template-columns: repeat(3, 32px);
  margin-right: 2px;
`;
const AppButtons = styled.div`
  display: grid;
  grid-template-columns: repeat(18, 1fr);
  width: 588px;
`;
const TaskButton = styled.button`
  display: flex;
  align-items: center;
  justify-content: center;
  background: ${(p) => (p.$state === 'active' ? '#4b524b' : 'transparent')};
  box-shadow: ${(p) => (p.$state ? 'inset 0 -2px 0 #76b9ed' : 'none')};
`;
const Clock = styled.time`
  margin-left: auto;
  padding: 1px 5px 0 0;
  color: #e6e6e6;
  text-align: center;
`;
const ClockLine = styled.span`
  display: block;
`;

/* ---------- composed parts ---------- */

const Big = ({ icon: Icon, lines, width, off, dim, caret }) => (
  <BigButton type="button" $width={width} disabled={off}>
    <Icon off={off || dim} />
    <BigLines>
      {lines.map((line, i) => (
        <BigLabel key={line}>
          {line}
          {caret === 'inline' && i === lines.length - 1 && <CaretIcon color={off ? '#999' : '#222'} />}
        </BigLabel>
      ))}
      {caret === 'below' && <CaretLine><CaretIcon /></CaretLine>}
    </BigLines>
  </BigButton>
);

const Small = ({ icon, label, off, caret }) => (
  <SmallButton type="button" disabled={off}>
    {icon}
    <span>{label}</span>
    {caret && <CaretIcon color={off ? '#999' : '#222'} />}
  </SmallButton>
);

function RibbonPanel({ hasSelection }) {
  const off = !hasSelection;
  return (
    <Ribbon>
      <RibbonGroup $width={201}>
        <GroupTools>
          <Big icon={BigPinIcon} lines={['즐겨찾기에', '고정']} width={45} off={hasSelection} />
          <Big icon={CopyIcon} lines={['복사']} width={28} off={off} />
          <Big icon={PasteIcon} lines={['붙여넣기']} width={35} />
          <SmallTools>
            <Small icon={<CutIcon off={off} />} label="잘라내기" off={off} />
            <Small icon={<PathIcon off={off} />} label="경로 복사" off={off} />
            <Small icon={<ShortcutIcon />} label="바로 가기 붙여넣기" />
          </SmallTools>
        </GroupTools>
        <GroupLabel>클립보드</GroupLabel>
      </RibbonGroup>
      <RibbonGroup $width={125}>
        <GroupTools>
          <Big icon={MoveToIcon} lines={['이동', '위치']} width={29} caret="inline" off={off} />
          <Big icon={CopyToIcon} lines={['복사', '위치']} width={29} caret="inline" off={off} />
          <ToolSeparator />
          <Big icon={DeleteIcon} lines={['삭제']} width={29} caret="below" dim={off} />
          <Big icon={RenameIcon} lines={['이름', '바꾸기']} width={29} off={off} />
        </GroupTools>
        <GroupLabel>구성</GroupLabel>
      </RibbonGroup>
      <RibbonGroup $width={94}>
        <GroupTools>
          <Big icon={NewFolderIcon} lines={['새', '폴더']} width={28} />
          <SmallTools>
            <Small icon={<NewItemIcon />} label="새 항목" caret />
            <Small icon={<EasyAccessIcon />} label="빠른 연결" caret />
          </SmallTools>
        </GroupTools>
        <GroupLabel>새로 만들기</GroupLabel>
      </RibbonGroup>
      <RibbonGroup $width={85}>
        <GroupTools>
          <Big icon={PropertiesIcon} lines={['속성']} width={29} caret="below" />
          <SmallTools $loose>
            <Small icon={off ? <OpenIcon /> : <MediaIcon />} label="열기" caret off={off} />
            <Small icon={<EditIcon />} label="편집" off />
            <Small icon={<HistoryIcon off={hasSelection} />} label="히스토리" off={hasSelection} />
          </SmallTools>
        </GroupTools>
        <GroupLabel>열기</GroupLabel>
      </RibbonGroup>
      <RibbonGroup $width={77}>
        <GroupTools>
          <SmallTools>
            <Small icon={<SelectGrid cells={[1, 1, 1, 1]} />} label="모두 선택" />
            <Small icon={<SelectGrid cells={[0, 0, 0, 0]} />} label="선택 안 함" />
            <Small icon={<SelectGrid cells={[0, 1, 1, 0]} />} label="선택 영역 반전" />
          </SmallTools>
        </GroupTools>
        <GroupLabel>선택</GroupLabel>
      </RibbonGroup>
    </Ribbon>
  );
}

const favorites = [
  ['star', '즐겨찾기', 0],
  ['desktop', '바탕 화면', 1, 'pin'],
  ['down', '다운로드', 1, 'pin'],
  ['doc', '문서', 1, 'pin'],
  ['picture', '사진', 1, 'pin'],
];
const drives = [
  ['driveC', '로컬 디스크 (C:)', 1],
  ['drive', '새 볼륨 (D:)', 1],
  ['drive', '로컬 디스크 (E:)', 1],
  ['drive', '새 볼륨 (F:)', 1],
];
const volumes = [
  [
    ['drive', '로컬 디스크 (E:)', 0],
    ['folder', 'Game', 1],
    ['folder', 'NPKI', 1],
    ['folder', '백업', 1],
    ['folder', '유틸리티', 1],
    ['folder', '컨텐츠', 1],
  ],
  [['drive', '새 볼륨 (D:)', 0], ['folder', 'youtube', 1]],
  [['drive', '새 볼륨 (F:)', 0], ['folder', 'NPKI', 1], ['folder', '프로그래밍_학원_자료', 1]],
  [['network', '네트워크', 0]],
];
const pcFolders = [
  ['cube', '3D 개체', 1],
  ['down', '다운로드', 1],
  ['video', '동영상', 1],
  ['doc', '문서', 1],
  ['desktop', '바탕 화면', 1],
  ['picture', '사진', 1],
  ['music', '음악', 1],
];

function buildTree(parent, child, extra = []) {
  const folders = pcFolders.flatMap((f) => (f[1] === parent ? [f, ['folder', child, 2, 'selected']] : [f]));
  return [favorites, [['pc', '내 PC', 0], ...folders, ...drives], ...volumes, ...extra];
}

const Navigation = ({ tree }) => (
  <NavPane aria-label="탐색 창">
    {tree.map((group, g) => (
      <ul key={g}>
        {group.map(([icon, name, level, mark], i) => (
          <NavItem key={i} $level={level} $selected={mark === 'selected'}>
            {navIcons[icon]}
            <NavLink href="#">{name}</NavLink>
            {mark === 'pin' && <SmallPin />}
          </NavItem>
        ))}
      </ul>
    ))}
  </NavPane>
);

function ExplorerWindow({ title, active, path, tree, columns, files, status }) {
  const ink = active ? '#111' : '#8c8c8c';
  return (
    <WindowFrame $active={active} aria-label={title}>
      <TitleBar>
        <QuickAccess>
          <FolderIcon w={8} />
          <Divider />
          <CheckDocIcon />
          <FolderIcon w={8} />
          <QuickMenuIcon />
          <Divider />
        </QuickAccess>
        <ContextTab>재생</ContextTab>
        <WindowTitle $active={active}>{title}</WindowTitle>
        <CaptionButton type="button" aria-label="최소화"><MinimizeIcon color={ink} /></CaptionButton>
        <CaptionButton type="button" aria-label="최대화"><MaximizeIcon color={ink} /></CaptionButton>
        <CaptionButton type="button" aria-label="닫기"><CloseIcon color={ink} /></CaptionButton>
      </TitleBar>
      <TabRow>
        <RibbonTab type="button" $kind="file" $width={37}>파일</RibbonTab>
        <RibbonTab type="button" $kind="current" $width={27}>홈</RibbonTab>
        <RibbonTab type="button" $width={36}>공유</RibbonTab>
        <RibbonTab type="button" $width={36}>보기</RibbonTab>
        <RibbonTab type="button" $kind="context" $width={54}>음악 도구</RibbonTab>
        <TabTools>
          <ChevronUp />
          <HelpIcon />
        </TabTools>
      </TabRow>
      <RibbonPanel hasSelection={files.length > 0} />
      <AddressRow>
        <HistoryButtons>
          <HistoryButton type="button" aria-label="뒤로" $space={10}><BackIcon /></HistoryButton>
          <HistoryButton type="button" aria-label="앞으로" $space={9}><ForwardIcon /></HistoryButton>
          <HistoryButton type="button" aria-label="최근 위치" $space={6}><ChevronDown w={5} /></HistoryButton>
          <HistoryButton type="button" aria-label="위로" $space={0}><UpIcon /></HistoryButton>
        </HistoryButtons>
        <AddressBox>
          <Crumbs>
            <FolderIcon />
            {path.map((p) => (
              <React.Fragment key={p}>
                <CrumbArrow><ChevronRight /></CrumbArrow>
                <Crumb type="button">{p}</Crumb>
              </React.Fragment>
            ))}
          </Crumbs>
          <BoxButton type="button" aria-label="이전 위치"><ChevronDown /></BoxButton>
          <BoxButton type="button" $ruled aria-label="새로 고침"><RefreshIcon /></BoxButton>
        </AddressBox>
        <SearchBox>
          <SearchIcon />
          <SearchInput type="text" aria-label="검색" placeholder={`${title} 검색`} />
        </SearchBox>
      </AddressRow>
      <Body>
        <Navigation tree={tree} />
        <FilePane>
          <FileArea>
            <FileTable $width={columns.reduce((sum, c) => sum + c[1], 0)}>
              <thead>
                <tr>
                  {columns.map(([name, width], i) => (
                    <HeadCell key={name} $width={width} $first={i === 0} scope="col">
                      {name}
                      {i === 0 && <SortMark><ChevronUp color="#666" /></SortMark>}
                    </HeadCell>
                  ))}
                </tr>
              </thead>
              <tbody>
                {files.map((file) => (
                  <tr key={file}>
                    <Cell $name><FileName><Mp3Icon />{file}</FileName></Cell>
                    <Cell>2023-11-11 오후 9:09</Cell>
                    <Cell>MP3 파일</Cell>
                  </tr>
                ))}
              </tbody>
            </FileTable>
            {files.length === 0 && <EmptyNote>이 폴더는 비어 있습니다.</EmptyNote>}
          </FileArea>
          <ScrollBar>
            <ScrollButton type="button" aria-label="왼쪽으로"><ChevronRight flip /></ScrollButton>
            <ScrollTrack><ScrollThumb /></ScrollTrack>
            <ScrollButton type="button" aria-label="오른쪽으로"><ChevronRight /></ScrollButton>
          </ScrollBar>
        </FilePane>
      </Body>
      <StatusBar>
        {status.map((s) => <StatusText key={s}>{s}</StatusText>)}
        <ViewButtons>
          <ViewButton type="button" $on aria-label="자세히"><DetailsIcon /></ViewButton>
          <ViewButton type="button" aria-label="큰 아이콘"><ThumbIcon /></ViewButton>
        </ViewButtons>
      </StatusBar>
    </WindowFrame>
  );
}

const songs = Array.from({ length: 24 }, (_, i) => `${i + 1}.mp3`);
const apps = [
  ['explorer', 'active'], ['bolt'], ['stripes'], ['battle'], ['ps'], ['pr'], ['plug'], ['g'], ['fz'],
  ['game'], ['id'], ['spring'], ['excel'], ['mysql'], ['fist'], ['word'], ['chrome', 'open'], ['notepad', 'open'],
];

export default function App() {
  return (
    <Desktop>
      <GlobalStyle />
      <Windows>
        <ExplorerWindow
          title="새 폴더"
          path={['내 PC', '다운로드', '새 폴더']}
          tree={buildTree('다운로드', '새 폴더')}
          columns={[['이름', 286], ['수정한 날짜', 156], ['유형', 120]]}
          files={songs}
          status={['24개 항목', '24개 항목 선택함 0바이트']}
        />
        <ExplorerWindow
          active
          title="음악폴더"
          path={['내 PC', '음악', '음악폴더']}
          tree={buildTree('음악', '음악폴더', [[['trash', '휴지통', 0]]])}
          columns={[['이름', 165], ['#', 43], ['제목', 173], ['참여 음악가', 120]]}
          files={[]}
          status={['0개 항목']}
        />
      </Windows>
      <TaskBar>
        <SystemButtons>
          {['start', 'search', 'taskview'].map((k) => (
            <TaskButton key={k} type="button" aria-label={k}>{taskIcons[k]}</TaskButton>
          ))}
        </SystemButtons>
        <AppButtons>
          {apps.map(([k, state]) => (
            <TaskButton key={k} type="button" $state={state} aria-label={k}>{taskIcons[k]}</TaskButton>
          ))}
        </AppButtons>
        <Clock>
          <ClockLine>오후 9:10</ClockLine>
          <ClockLine>2023-11-11</ClockLine>
        </Clock>
      </TaskBar>
    </Desktop>
  );
}
